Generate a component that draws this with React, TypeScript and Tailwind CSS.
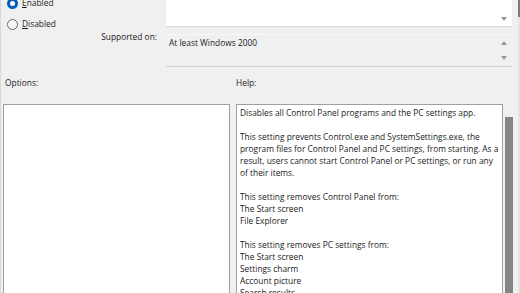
import React from "react";

const Down = () => (
  <svg width="6" height="4" viewBox="0 0 6 4"><path d="M0 0 L6 0 L3 4 Z" fill="#9a9a9a" /></svg>
);
const Up = () => (
  <svg width="6" height="4" viewBox="0 0 6 4"><path d="M0 4 L6 4 L3 0 Z" fill="#9a9a9a" /></svg>
);

const helpLines = [
  "Disables all Control Panel programs and the PC settings app.",
  "",
  "This setting prevents Control.exe and SystemSettings.exe, the",
  "program files for Control Panel and PC settings, from starting. As a",
  "result, users cannot start Control Panel or PC settings, or run any",
  "of their items.",
  "",
  "This setting removes Control Panel from:",
  "The Start screen",
  "File Explorer",
  "",
  "This setting removes PC settings from:",
  "The Start screen",
  "Settings charm",
  "Account picture",
  "Search results",
];

export default function App() {
  return (
    <div
      className="w-[520px] h-[293px] overflow-hidden bg-[#f0f0f0] text-[#1b1b1b] flex"
      style={{ fontFamily: '"Open Sans", "Noto Sans", sans-serif' }}
    >
      <div className="flex-1 flex flex-col text-[8.4px] leading-[12px] border-l border-[#d9d9d9]">
        {/* top section */}
        <div className="flex">
          <div className="w-[165px] flex flex-col">
            <div className="flex items-center gap-[4px] pl-[6px] h-[14px] mt-[-4px]">
              <span className="w-[11px] h-[11px] rounded-full bg-[#005fb8] flex items-center justify-center">
                <span className="w-[5px] h-[5px] rounded-full bg-white" />
              </span>
              <span><span className="underline">E</span>nabled</span>
            </div>
            <div className="flex items-center gap-[4px] pl-[6px] h-[14px] mt-[7px]">
              <span className="w-[11px] h-[11px] rounded-full border border-[#6a6a6a] bg-[#f7f7f7]" />
              <span><span className="underline">D</span>isabled</span>
            </div>
            <div className="h-[12px] flex items-center justify-end pr-[9px]">Supported on:</div>
          </div>
          <div className="w-[346px] flex flex-col">
            <div className="h-[27px] bg-white border-b border-[#dcdcdc] flex items-end justify-end pr-[5px] pb-[5px]">
              <Down />
            </div>
            <div className="mt-[7px] h-[33px] border-b border-[#d0d0d0] border-t border-t-[#f8f8f8] flex">
              <div className="flex-1 pl-[3px] pt-[2px]">At least Windows 2000</div>
              <div className="flex flex-col items-center justify-between pr-[5px] pt-[6px] pb-[6px]">
                <Up />
                <Down />
              </div>
            </div>
          </div>
          <div className="flex-1" />
        </div>

        {/* labels */}
        <div className="flex mt-[10px] h-[12px]">
          <div className="w-[235px] pl-[4px]">Options:</div>
          <div>Help:</div>
        </div>

        {/* panes */}
        <div className="flex mt-[15px] flex-1">
          <div className="ml-[2px] w-[227px] h-[200px] border border-[#a0a0a0] bg-white" />
          <div className="ml-[6px] w-[267px] h-[200px] border border-[#a0a0a0] bg-white pl-[3px] pt-[2px] overflow-hidden whitespace-pre">
            {helpLines.map((l, i) => (
              <div key={i} className="h-[12px]">{l || " "}</div>
            ))}
          </div>
          <div className="w-[15px] h-[200px] flex flex-col pl-[2px] pt-[13px]">
            <div className="w-[8px] flex-1 bg-[#858585]" />
          </div>
        </div>
      </div>
      <div className="w-[2px] flex flex-col">
        <div className="h-[17px] bg-[#7a7a7a]" />
        <div className="flex-1 bg-[#e4e4e4]" />
      </div>
    </div>
  );
}
